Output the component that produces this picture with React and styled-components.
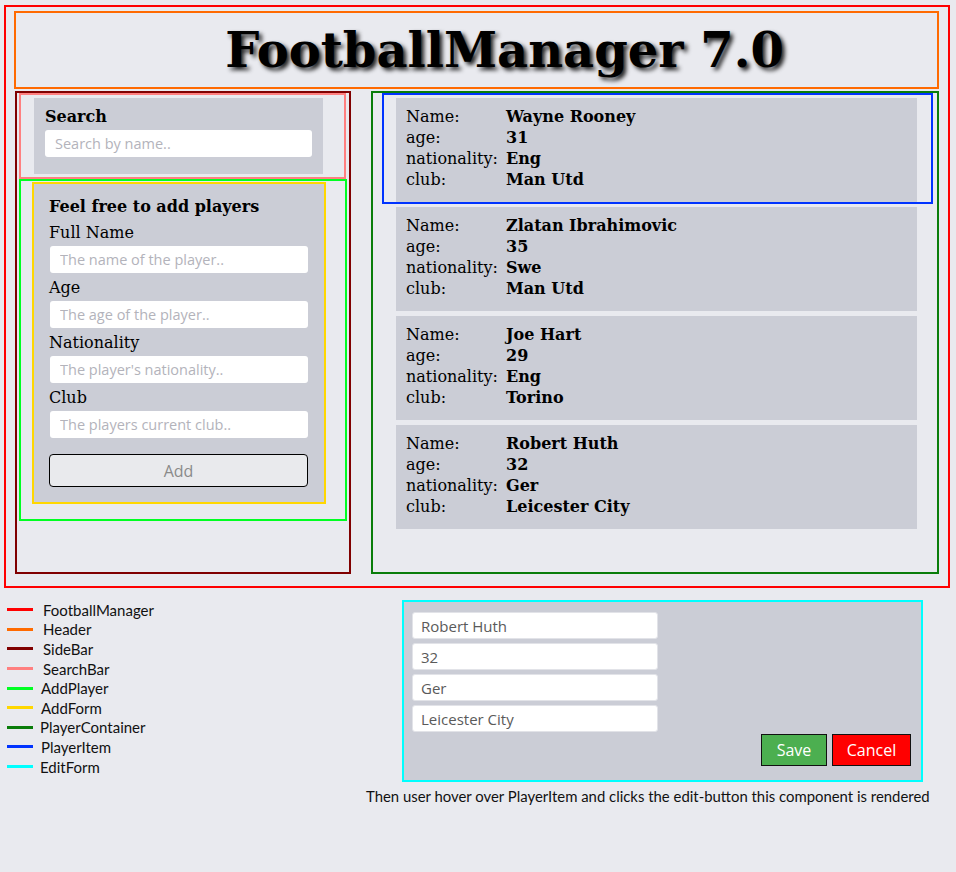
import React from "react";
import styled, { createGlobalStyle } from "styled-components";

const GlobalStyle = createGlobalStyle`
  body {
    margin: 0;
    background: #e9eaef;
    font-family: "DejaVu Serif", serif;
    color: #000;
  }
`;

const Page = styled.div`
  padding: 5px 0 0 4px;
`;

const Frame = styled.div`
  width: 946px;
  height: 583px;
  box-sizing: border-box;
  border: 2px solid #ff0000;
  padding: 4px 9px 0 8px;
`;

const Header = styled.header`
  height: 78px;
  box-sizing: border-box;
  border: 2px solid #ff6a00;
  display: flex;
  align-items: center;
  justify-content: center;
  padding-left: 56px;
`;

const Title = styled.h1`
  margin: 0;
  font-family: "DejaVu Serif", serif;
  font-weight: bold;
  font-size: 48px;
  text-shadow: 3px 3px 4px rgba(0, 0, 0, 0.85);
`;

const Body = styled.div`
  display: flex;
  gap: 20px;
  margin: 2px 0 0 1px;
`;

const SideBar = styled.aside`
  width: 336px;
  height: 483px;
  box-sizing: border-box;
  border: 2px solid #800000;
  padding-left: 2px;
`;

const SearchBar = styled.div`
  width: 327px;
  height: 86px;
  box-sizing: border-box;
  border: 2px solid #ff8080;
  padding: 3px 0 0 13px;
`;

const SearchPanel = styled.div`
  width: 289px;
  height: 76px;
  box-sizing: border-box;
  background: #cbcdd6;
  padding: 9px 11px 0;
`;

const BoldLine = styled.div`
  font-weight: bold;
  font-size: 16px;
  line-height: 19px;
  margin-bottom: ${(p) => p.$gap || 0}px;
`;

const TextInput = styled.input`
  display: block;
  width: ${(p) => p.$width || "100%"};
  height: 27px;
  box-sizing: border-box;
  margin: 0 0 0 ${(p) => p.$indent || 0}px;
  border: none;
  border-radius: 3px;
  background: #fff;
  padding: 0 10px;
  font-family: "Open Sans", sans-serif;
  font-size: 14.5px;
  color: #555;
  outline: none;

  &::placeholder {
    color: #b3b3bb;
  }
`;

const AddPlayer = styled.div`
  width: 328px;
  height: 342px;
  box-sizing: border-box;
  border: 2px solid #00ff22;
  padding: 1px 0 0 11px;
`;

const AddForm = styled.form`
  width: 294px;
  height: 322px;
  box-sizing: border-box;
  border: 2px solid #ffd700;
  background: #cbcdd6;
  padding: 13px 16px 14px 15px;
`;

const Label = styled.label`
  display: block;
  font-size: 16px;
  line-height: 19px;
  margin: 5px 0 4px;
`;

const AddButton = styled.button`
  display: block;
  width: 100%;
  height: 33px;
  margin-top: 16px;
  box-sizing: border-box;
  border: 1px solid #000;
  border-radius: 4px;
  background: #e9eaed;
  color: #8a8a8a;
  font-family: "Open Sans", sans-serif;
  font-size: 16px;
`;

const PlayerContainer = styled.section`
  width: 568px;
  height: 483px;
  box-sizing: border-box;
  border: 2px solid #0a7d0a;
  padding-left: 9px;
`;

const PlayerItem = styled.div`
  width: 551px;
  box-sizing: border-box;
  border: ${(p) => (p.$active ? "2px solid #0033ff" : "none")};
  padding: ${(p) => (p.$active ? "3px 14px 0 12px" : "0 16px 0 14px")};
  margin-bottom: ${(p) => (p.$active ? 3 : 5)}px;
`;

const Card = styled.div`
  height: 104px;
  box-sizing: border-box;
  background: #cbcdd6;
  padding: 8px 10px 0;
  display: grid;
  grid-template-columns: 100px 1fr;
  grid-auto-rows: 21px;
  align-content: start;
  font-size: 16px;
  line-height: 21px;
`;

const Value = styled.span`
  font-weight: bold;
`;

const Bottom = styled.div`
  display: flex;
  margin-top: 12px;
`;

const Legend = styled.ul`
  list-style: none;
  margin: 0;
  padding: 0 0 0 3px;
  width: 359px;
`;

const LegendRow = styled.li`
  display: flex;
  align-items: center;
  height: 19.6px;
  font-family: "Lato", sans-serif;
  font-size: 15px;
  color: #111;
`;

const Swatch = styled.span`
  width: 26px;
  height: 3px;
  background: ${(p) => p.$color};
  margin-right: ${(p) => p.$space}px;
`;

const RightColumn = styled.div`
  display: flex;
  flex-direction: column;
`;

const EditForm = styled.form`
  width: 521px;
  height: 182px;
  margin-left: 36px;
  box-sizing: border-box;
  border: 2px solid #00ffff;
  background: #cbcdd6;
  padding: 10px 10px 0 8px;
  display: flex;
  flex-direction: column;
  gap: 4px;
`;

const EditInput = styled(TextInput)`
  width: 246px;
  border: 1px solid #e2e3e8;
  padding: 0 8px;
  font-size: 15px;
  color: #5a5a5a;
`;

const Actions = styled.div`
  display: flex;
  justify-content: flex-end;
  gap: 5px;
  margin-top: -2px;
`;

const ActionButton = styled.button`
  width: ${(p) => p.$width}px;
  height: 32px;
  border: 1px solid #111;
  background: ${(p) => p.$bg};
  color: #fff;
  font-family: "Open Sans", sans-serif;
  font-size: 16px;
  padding: 0;
`;

const Caption = styled.p`
  margin: 5px 0 0;
  font-family: "Lato", sans-serif;
  font-size: 14.9px;
  color: #111;
`;

const players = [
  { name: "Wayne Rooney", age: 31, nationality: "Eng", club: "Man Utd" },
  { name: "Zlatan Ibrahimovic", age: 35, nationality: "Swe", club: "Man Utd" },
  { name: "Joe Hart", age: 29, nationality: "Eng", club: "Torino" },
  { name: "Robert Huth", age: 32, nationality: "Ger", club: "Leicester City" },
];

const legend = [
  { color: "#ff0000", label: "FootballManager", space: 10 },
  { color: "#ff6a00", label: "Header", space: 10 },
  { color: "#800000", label: "SideBar", space: 10 },
  { color: "#ff8080", label: "SearchBar", space: 10 },
  { color: "#00ff22", label: "AddPlayer", space: 8 },
  { color: "#ffd700", label: "AddForm", space: 8 },
  { color: "#0a7d0a", label: "PlayerContainer", space: 7 },
  { color: "#0033ff", label: "PlayerItem", space: 8 },
  { color: "#00ffff", label: "EditForm", space: 7 },
];

const App = () => {
  return (
    <Page>
      <GlobalStyle />
      <Frame>
        <Header>
          <Title>FootballManager 7.0</Title>
        </Header>
        <Body>
          <SideBar>
            <SearchBar>
              <SearchPanel>
                <BoldLine $gap={4}>Search</BoldLine>
                <TextInput placeholder="Search by name.." />
              </SearchPanel>
            </SearchBar>
            <AddPlayer>
              <AddForm onSubmit={(e) => e.preventDefault()}>
                <BoldLine $gap={7}>Feel free to add players</BoldLine>
                <Label>Full Name</Label>
                <TextInput $indent={1} $width="258px" placeholder="The name of the player.." />
                <Label>Age</Label>
                <TextInput $indent={1} $width="258px" placeholder="The age of the player.." />
                <Label>Nationality</Label>
                <TextInput $indent={1} $width="258px" placeholder="The player's nationality.." />
                <Label>Club</Label>
                <TextInput $indent={1} $width="258px" placeholder="The players current club.." />
                <AddButton type="submit">Add</AddButton>
              </AddForm>
            </AddPlayer>
          </SideBar>
          <PlayerContainer>
            {players.map((p, i) => (
              <PlayerItem key={p.name} $active={i === 0}>
                <Card>
                  <span>Name:</span>
                  <Value>{p.name}</Value>
                  <span>age:</span>
                  <Value>{p.age}</Value>
                  <span>nationality:</span>
                  <Value>{p.nationality}</Value>
                  <span>club:</span>
                  <Value>{p.club}</Value>
                </Card>
              </PlayerItem>
            ))}
          </PlayerContainer>
        </Body>
      </Frame>
      <Bottom>
        <Legend>
          {legend.map((l) => (
            <LegendRow key={l.label}>
              <Swatch $color={l.color} $space={l.space} />
              {l.label}
            </LegendRow>
          ))}
        </Legend>
        <RightColumn>
          <EditForm onSubmit={(e) => e.preventDefault()}>
            <EditInput defaultValue="Robert Huth" />
            <EditInput defaultValue="32" />
            <EditInput defaultValue="Ger" />
            <EditInput defaultValue="Leicester City" />
            <Actions>
              <ActionButton type="submit" $width={66} $bg="#4caf50">Save</ActionButton>
              <ActionButton type="button" $width={79} $bg="#ff0000">Cancel</ActionButton>
            </Actions>
          </EditForm>
          <Caption>
            Then user hover over PlayerItem and clicks the edit-button this component is rendered
          </Caption>
        </RightColumn>
      </Bottom>
    </Page>
  );
};

export default App;
